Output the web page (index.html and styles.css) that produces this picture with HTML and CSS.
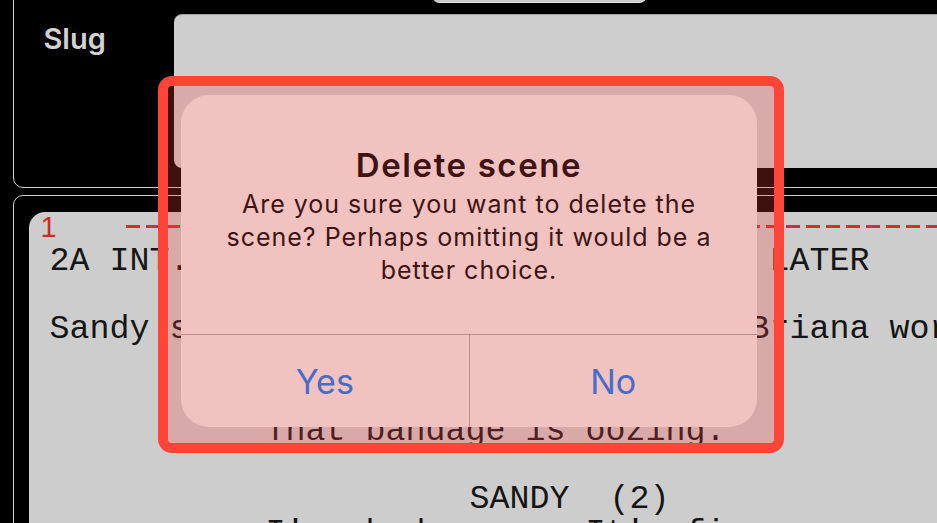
FILE: index.html
```html
<html>
<head>
  <link rel="stylesheet" href="styles.css">
</head>
<body>

<div class="editor">
  <div class="slug-box">
    <div class="pill"></div>
    <div class="slug-row">
      <div class="slug-label">Slug</div>
      <div class="slug-field"></div>
    </div>
  </div>

  <div class="script-box">
    <div class="page">
      <div class="page-head">
        <span class="page-num">1</span>
        <span class="page-break"></span>
      </div>
      <div class="line">2A INT. BRIANA'S BATHROOM - MOMENTS LATER</div>
      <div class="line"> </div>
      <div class="line">Sandy sits on the edge of a tub as Briana works on her arm.</div>
      <div class="line"> </div>
      <div class="line cue">BRIANA</div>
      <div class="line dialogue">That bandage is oozing.</div>
      <div class="line"> </div>
      <div class="line cue">SANDY  (2)</div>
      <div class="line dialogue">I've had worse. It's fine.</div>
    </div>
  </div>
</div>

<div class="alert-frame">
  <div class="alert">
    <div class="alert-body">
      <div class="alert-title">Delete scene</div>
      <div class="alert-message">Are you sure you want to delete the scene? Perhaps omitting it would be a better choice.</div>
    </div>
    <div class="alert-actions">
      <div class="alert-btn">Yes</div>
      <div class="alert-btn">No</div>
    </div>
  </div>
</div>

</body>
</html>
```

FILE: styles.css
```css
body {
  margin: 0;
  width: 937px;
  height: 523px;
  overflow: hidden;
  position: relative;
  background: #000;
  font-family: Inter, "Noto Sans", sans-serif;
}

.editor {
  height: 523px;
  overflow: hidden;
}

.slug-box {
  box-sizing: border-box;
  height: 218px;
  margin: -30px -40px 0 13px;
  border: 1.5px solid #cfcfcf;
  border-radius: 10px;
}

.pill {
  width: 215px;
  height: 14px;
  margin: 17.5px 0 0 417.5px;
  background: #cccccc;
  border: 1px solid #e2e2e2;
  border-top: none;
  border-radius: 0 0 8px 8px;
  box-sizing: border-box;
}

.slug-row {
  display: flex;
  margin-top: 11px;
}

.slug-label {
  box-sizing: border-box;
  width: 159.5px;
  padding: 10px 0 0 29.5px;
  font-size: 29px;
  line-height: 29px;
  font-weight: 600;
  color: #d2d2d2;
}

.slug-field {
  flex: 1;
  height: 154px;
  box-sizing: border-box;
  background: #cecece;
  border-top: 1px solid #9d9d9d;
  border-radius: 8px 0 0 8px;
}

.script-box {
  box-sizing: border-box;
  height: 400px;
  margin: 7px -40px 0 13px;
  padding: 15.5px 0 0 14.5px;
  border: 1.5px solid #cfcfcf;
  border-radius: 10px;
}

.page {
  height: 400px;
  padding-left: 21px;
  background: #cdcdcd;
  border-top-left-radius: 16px;
  font-family: "Liberation Mono", "Courier New", monospace;
  font-size: 33.33px;
  line-height: 34px;
  color: #151515;
}

.line {
  white-space: pre;
  height: 34px;
}

.page-head {
  display: flex;
  align-items: flex-start;
  height: 32px;
  margin-left: -9px;
}

.page-num {
  font-family: "Liberation Sans", Arial, sans-serif;
  font-size: 29px;
  line-height: 30px;
  color: #cc2a2a;
}

.page-break {
  flex: 1;
  height: 3px;
  margin: 13px 0 0 69px;
  background: repeating-linear-gradient(90deg, #cf3030 0 14px, transparent 14px 20px);
}

.cue {
  padding-left: 420px;
}

.dialogue {
  padding-left: 216px;
}

/* alert, with the red highlight drawn round it */
.alert-frame {
  position: absolute;
  left: 158px;
  top: 76px;
  width: 626px;
  height: 377px;
  box-sizing: border-box;
  padding: 9px 17px 16px 13px;
  border: 10px solid #ff4438;
  border-radius: 14px;
  background: rgba(250, 63, 63, 0.25);
}

.alert {
  display: flex;
  flex-direction: column;
  height: 332px;
  background: #f0c3c1;
  border-radius: 28px;
  overflow: hidden;
  text-align: center;
  color: #401313;
}

.alert-body {
  height: 239px;
  box-sizing: border-box;
  padding: 51px 40px 0;
}

.alert-title {
  font-size: 33px;
  line-height: 38px;
  font-weight: 600;
  letter-spacing: 1.6px;
  margin-bottom: 4px;
}

.alert-message {
  font-size: 25px;
  line-height: 33px;
  letter-spacing: 1px;
}

.alert-actions {
  flex: 1;
  display: flex;
  border-top: 1px solid #b98c8b;
}

.alert-btn {
  flex: 1;
  display: flex;
  align-items: center;
  justify-content: center;
  font-size: 34px;
  color: #476dc8;
}

.alert-btn + .alert-btn {
  border-left: 1px solid #b98c8b;
}
```
